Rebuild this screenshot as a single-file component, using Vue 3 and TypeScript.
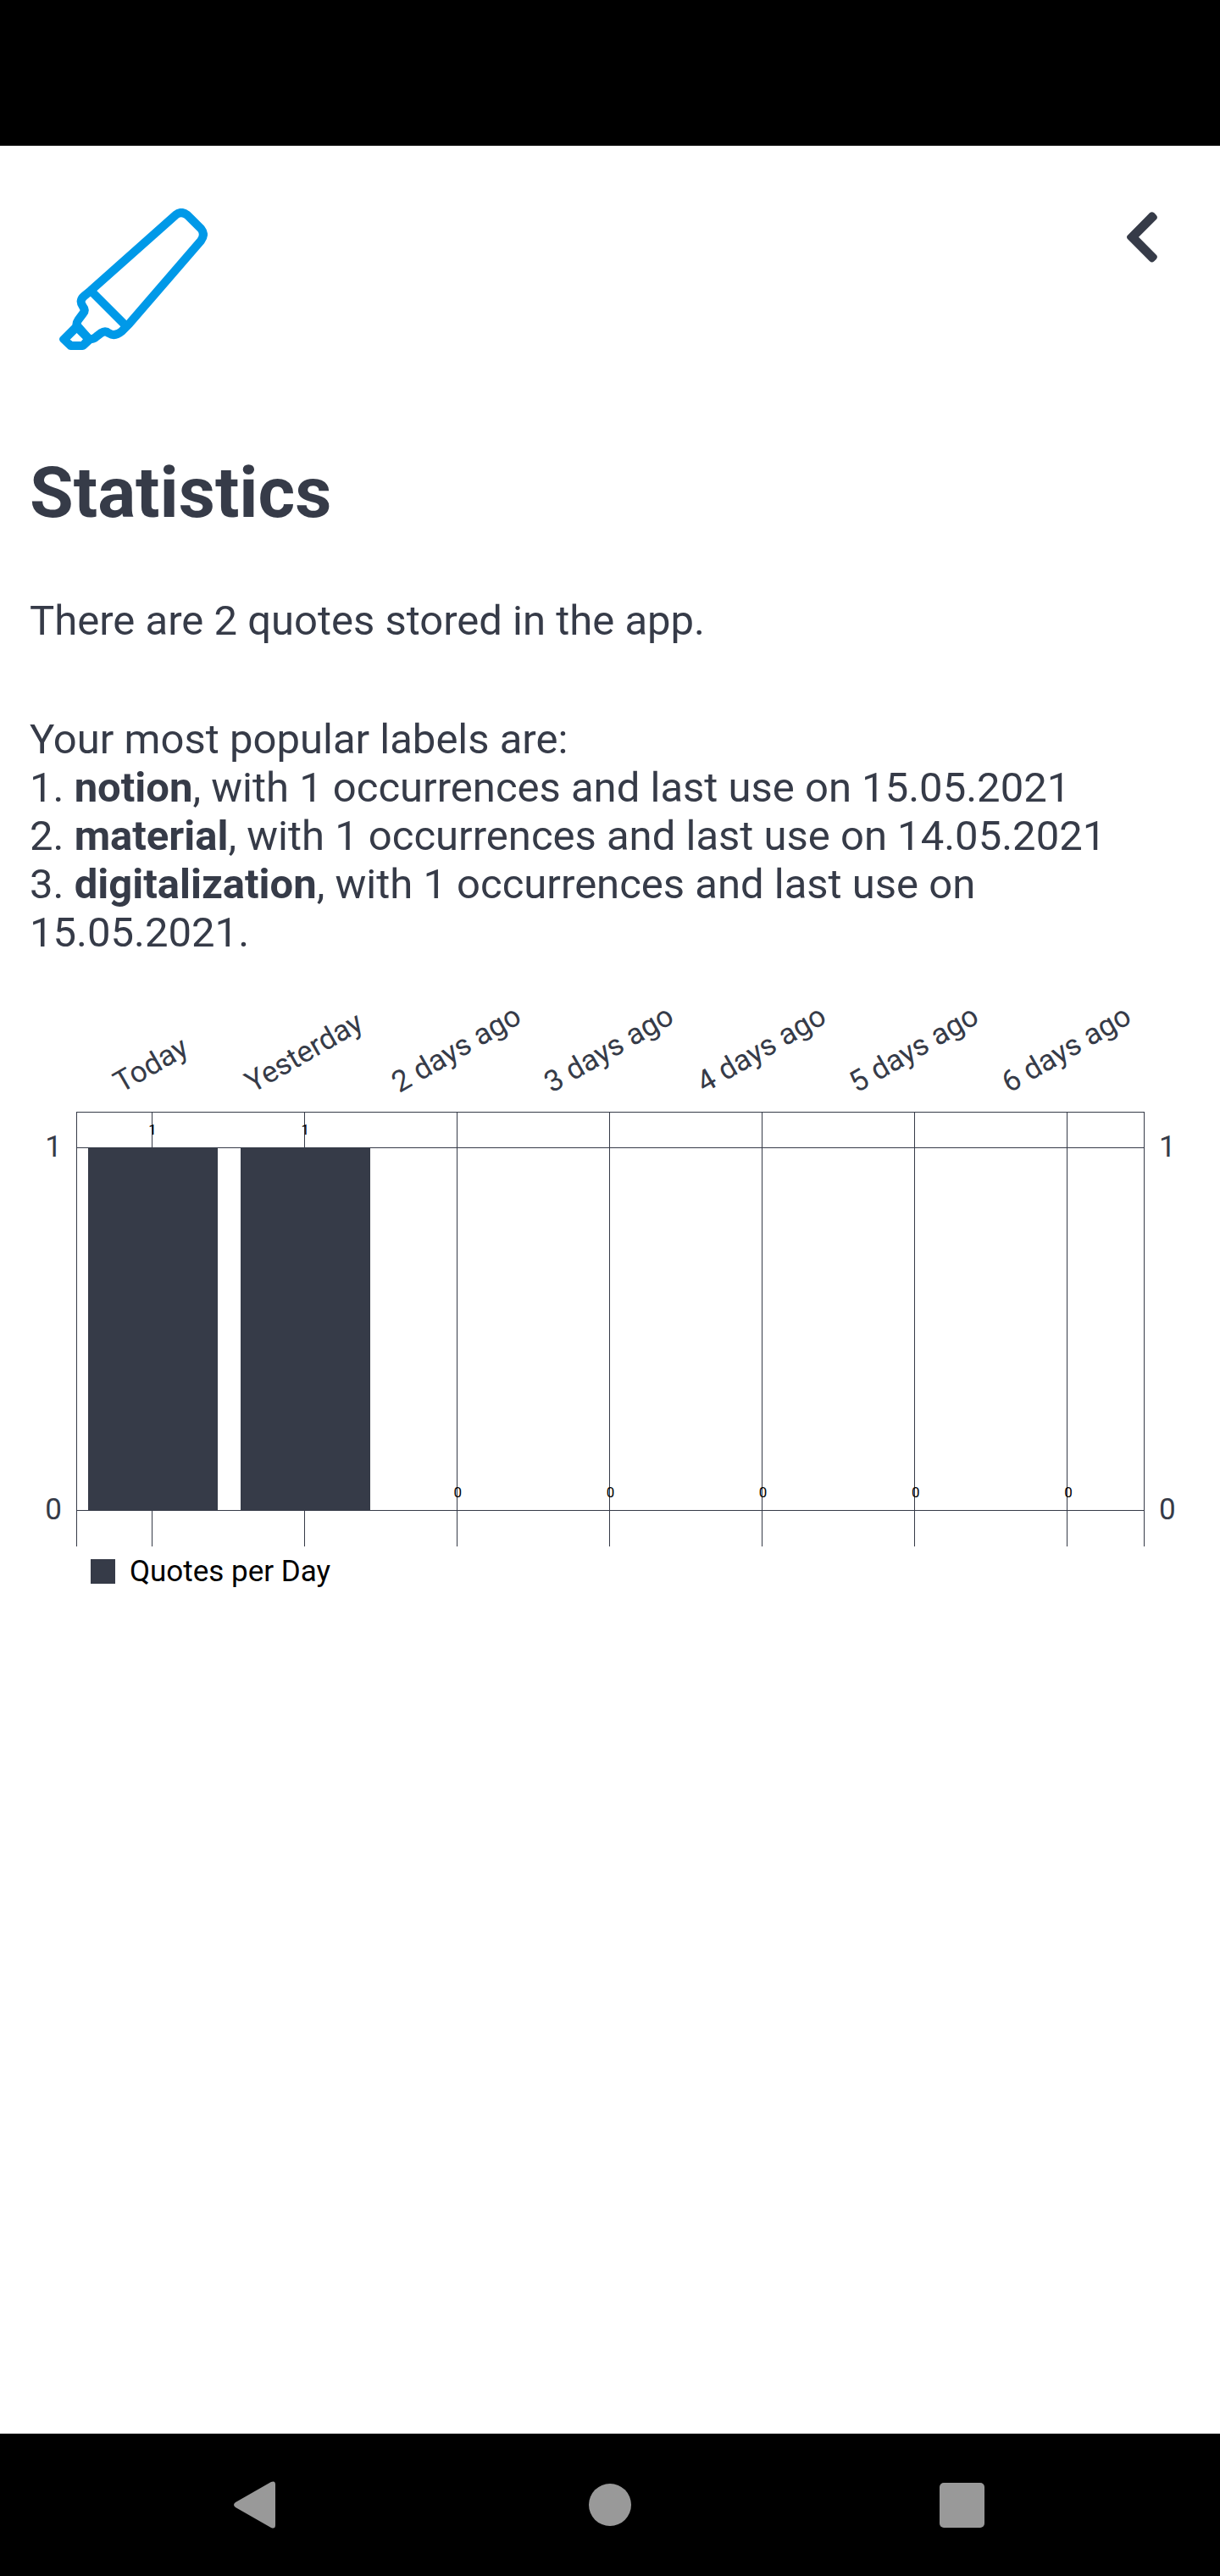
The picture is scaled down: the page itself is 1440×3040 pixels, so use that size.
<script setup lang="ts">
interface LabelUsage {
  name: string
  count: number
  lastUse: string
}

interface DayCount {
  day: string
  quotes: number
}

const labels: LabelUsage[] = [
  { name: 'notion', count: 1, lastUse: '15.05.2021' },
  { name: 'material', count: 1, lastUse: '14.05.2021' },
  { name: 'digitalization', count: 1, lastUse: '15.05.2021.' },
]

const days: DayCount[] = [
  { day: 'Today', quotes: 1 },
  { day: 'Yesterday', quotes: 1 },
  { day: '2 days ago', quotes: 0 },
  { day: '3 days ago', quotes: 0 },
  { day: '4 days ago', quotes: 0 },
  { day: '5 days ago', quotes: 0 },
  { day: '6 days ago', quotes: 0 },
]

const ticks = [1, 0]

// The axis reaches a tenth above its highest value.
const axisMax = 1.1
const barHeight = (quotes: number): string => `${(quotes / axisMax) * 100}%`
</script>

<template>
  <div class="screen">
    <div class="status-bar"></div>

    <main class="content">
      <header class="header">
        <svg class="logo" viewBox="90 78 525 501" aria-hidden="true">
          <g fill="none" stroke="#0099e8" stroke-width="30" stroke-linejoin="round">
            <path d="M200 370 L502 101 Q522 85 543 101 L592 150 Q608 170 591 193 L337 487 L311 513 Q287 533 266 520 Q253 509 238 519 L221 532 Q210 542 195 541 L151 497 Q149 484 157 473 L174 450 Q184 438 174 426 Q158 405 178 388 Z" />
            <path d="M205 373 L319 487" />
          </g>
          <path fill="#0099e8" fill-rule="evenodd" d="M135 491 L93 533 Q87 541 93 549 L118 573 Q122 579 130 579 L172 579 Q180 579 185 574 L206 554 L206 530 L165 484 Z M154 517 L128 542 L137 549 L167 549 L175 539 Z" />
        </svg>
        <button class="back" type="button" aria-label="Back">
          <svg viewBox="90 90 108 180" aria-hidden="true">
            <path fill="#363b48" d="M92 174 L171 94 Q179 87 187 94 L194 101 Q201 109 195 116 L132 179 L195 243 Q201 250 194 258 L187 265 Q179 272 171 265 L92 185 Q88 179 92 174 Z" />
          </svg>
        </button>
      </header>

      <section class="text">
        <h1>Statistics</h1>
        <p>There are 2 quotes stored in the app.</p>
        <div class="popular">
          <p>Your most popular labels are:</p>
          <p v-for="(label, i) in labels" :key="label.name">
            {{ i + 1 }}. <b>{{ label.name }}</b>, with {{ label.count }} occurrences and last use on {{ label.lastUse }}
          </p>
        </div>
      </section>

      <figure class="chart">
        <div class="days">
          <div v-for="d in days" :key="d.day" class="day"><span>{{ d.day }}</span></div>
        </div>
        <div class="axis axis-left">
          <span v-for="t in ticks" :key="t">{{ t }}</span>
        </div>
        <div class="plot">
          <div class="band"></div>
          <div class="band"></div>
          <div class="columns">
            <div v-for="d in days" :key="d.day" class="column">
              <div class="stack">
                <span class="value">{{ d.quotes }}</span>
                <div class="bar" :style="{ height: barHeight(d.quotes) }"></div>
              </div>
            </div>
          </div>
        </div>
        <div class="axis axis-right">
          <span v-for="t in ticks" :key="t">{{ t }}</span>
        </div>
        <figcaption class="legend"><i class="swatch"></i>Quotes per Day</figcaption>
      </figure>
    </main>

    <nav class="nav-bar">
      <button type="button" aria-label="Back">
        <svg viewBox="0 0 56 56"><path fill="#999" d="M2 25 L44 1 Q49 -1 49 4 L49 52 Q49 57 44 55 L2 31 Q-2 28 2 25 Z" /></svg>
      </button>
      <button type="button" aria-label="Home">
        <svg viewBox="0 0 56 56"><circle cx="28" cy="28" r="25" fill="#999" /></svg>
      </button>
      <button type="button" aria-label="Recent apps">
        <svg viewBox="0 0 56 56"><rect x="1" y="2" width="53" height="53" rx="5" fill="#999" /></svg>
      </button>
    </nav>
  </div>
</template>

<style>
body {
  margin: 0;
  background: #fff;
}
</style>

<style scoped>
.screen {
  display: flex;
  flex-direction: column;
  min-height: 100vh;
  background: #fff;
  color: #363b48;
  font-family: Roboto, "Liberation Sans", sans-serif;
}

button {
  padding: 0;
  border: 0;
  background: none;
  cursor: pointer;
}

svg {
  display: block;
}

.status-bar {
  height: 172px;
  background: #000;
}

.content {
  flex: 1;
}

.header {
  display: flex;
  justify-content: space-between;
  align-items: flex-start;
  padding: 74px 74px 120px 70px;
}

.logo {
  width: 175px;
  height: 167px;
}

.back {
  margin-top: 4px;
}

.back svg {
  width: 36px;
  height: 60px;
}

.text {
  padding: 0 35px;
  font-size: 49px;
  line-height: 57px;
}

h1 {
  margin: 0 0 73px;
  font-size: 84px;
  line-height: 98px;
  font-weight: 700;
}

p {
  margin: 0;
}

.popular {
  margin-top: 83px;
}

.chart {
  display: grid;
  grid-template-columns: 90px 1fr 89px;
  grid-template-rows: auto 513px auto;
  margin: 48px 0 0;
  font-size: 35px;
  line-height: 41px;
}

.days {
  grid-column: 2;
  display: flex;
  height: 121px;
  padding-bottom: 14px;
}

.day {
  flex: 1;
  display: flex;
  justify-content: center;
  align-items: flex-end;
  white-space: nowrap;
}

/* Keeps the tilted name centred over its column. */
.day span {
  transform-origin: left bottom;
  transform: translateX(calc(7% + 8px)) rotate(-30deg);
}

.axis {
  grid-row: 2;
  display: flex;
  flex-direction: column;
  justify-content: space-between;
  padding: 21px 17px 23px;
}

.axis-left {
  grid-column: 1;
  text-align: right;
}

.axis-right {
  grid-column: 3;
}

.plot {
  grid-column: 2;
  grid-row: 2;
  display: grid;
  grid-template-columns: 1fr;
  grid-template-rows: 43px 1fr 42px;
  box-shadow: inset 1px 0 #363b48, inset -1px 0 #363b48, inset 0 1px #363b48;
}

.band {
  grid-column: 1;
  border-bottom: 1px solid #363b48;
}

.band:nth-child(1) {
  grid-row: 1;
}

.band:nth-child(2) {
  grid-row: 2;
}

.columns {
  grid-column: 1;
  grid-row: 1 / 4;
  display: flex;
}

.column {
  flex: 1;
  display: grid;
  grid-template-rows: 1fr 42px;
  background: linear-gradient(#363b48, #363b48) calc(50% - 1px) 0 / 1px 100% no-repeat;
}

.stack {
  display: flex;
  flex-direction: column;
  justify-content: flex-end;
  align-items: center;
  min-height: 0;
}

.value {
  margin-bottom: 12px;
  color: #000;
  font-size: 17px;
  line-height: 20px;
}

.bar {
  flex: none;
  width: 85%;
  background: #363b48;
}

.legend {
  grid-column: 2;
  display: flex;
  align-items: center;
  gap: 17px;
  padding: 9px 17px;
  color: #000;
}

.swatch {
  width: 29px;
  height: 29px;
  background: #363b48;
}

.nav-bar {
  display: flex;
  justify-content: center;
  align-items: center;
  gap: 25%;
  height: 168px;
  background: #000;
}

.nav-bar svg {
  width: 56px;
  height: 56px;
}
</style>
